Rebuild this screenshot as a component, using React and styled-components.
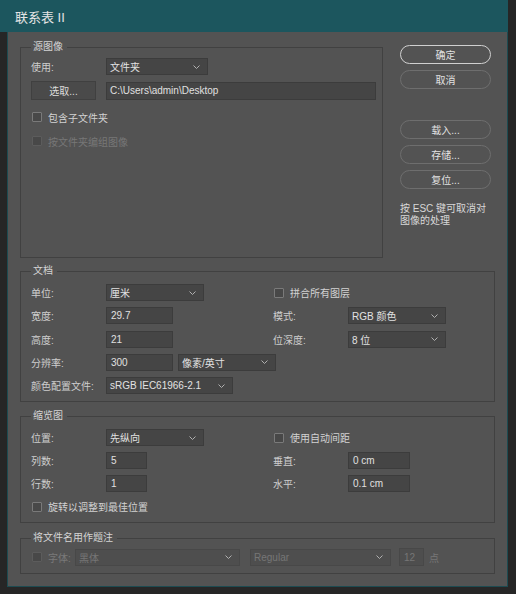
import React from "react";
import styled, { createGlobalStyle } from "styled-components";

const GlobalStyle = createGlobalStyle`
  html, body {
    margin: 0;
    padding: 0;
    background: #262626;
  }
  body {
    width: 516px;
    height: 594px;
    overflow: hidden;
    font-family: "Liberation Sans", "Noto Sans CJK SC", sans-serif;
    font-size: 10px;
    color: #d0d0d0;
  }
`;

const Window = styled.div`
  width: 508px;
`;

const TitleBar = styled.div`
  height: 32px;
  box-sizing: border-box;
  padding-left: 15px;
  display: flex;
  align-items: center;
  background: #1c565e;
  color: #e4e4e4;
  font-size: 13px;
`;

const Body = styled.div`
  margin-left: 7px;
  padding: 8px 12px 12px;
  background: #535353;
  border: 1px solid #1d4b51;
  border-top: none;
  display: flex;
  flex-direction: column;
`;

const TopRow = styled.div`
  display: flex;
  align-items: flex-start;
  gap: 17px;
`;

const Group = styled.fieldset`
  margin: ${(p) => p.$mt || 0}px 0 0;
  padding: ${(p) => p.$pad || "6px 10px 7px"};
  width: ${(p) => (p.$w ? `${p.$w}px` : "auto")};
  min-height: ${(p) => (p.$h ? `${p.$h}px` : "0")};
  min-width: 0;
  box-sizing: border-box;
  border: 1px solid #414141;
`;

const Legend = styled.legend`
  padding: 0 4px 0 2px;
  font-size: 10px;
  line-height: 14px;
  color: #d4d4d4;
`;

const Row = styled.div`
  display: flex;
  align-items: center;
  height: ${(p) => p.$h || 17}px;
  margin-top: ${(p) => p.$mt || 0}px;
`;

const Label = styled.span`
  width: ${(p) => (p.$w ? `${p.$w}px` : "75px")};
  flex-shrink: 0;
  color: ${(p) => (p.$disabled ? "#7a7a7a" : "#cecece")};
  white-space: nowrap;
`;

const SelectBox = styled.div`
  width: ${(p) => p.$w}px;
  height: 17px;
  box-sizing: border-box;
  padding: 0 7px 0 3px;
  margin-left: ${(p) => p.$ml || 0}px;
  display: flex;
  align-items: center;
  justify-content: space-between;
  flex-shrink: 0;
  background: ${(p) => (p.$disabled ? "#4e4e4e" : "#454545")};
  border: 1px solid ${(p) => (p.$disabled ? "#484848" : "#3c3c3c")};
  color: ${(p) => (p.$disabled ? "#767676" : "#e2e2e2")};
  white-space: nowrap;
`;

const Field = styled.div`
  width: ${(p) => p.$w}px;
  height: ${(p) => p.$h || 17}px;
  box-sizing: border-box;
  padding-left: ${(p) => p.$pl ?? 4}px;
  margin-left: ${(p) => p.$ml || 0}px;
  display: flex;
  align-items: center;
  flex-shrink: 0;
  background: ${(p) => (p.$disabled ? "#4e4e4e" : "#454545")};
  border: 1px solid ${(p) => (p.$disabled ? "#484848" : "#3c3c3c")};
  color: ${(p) => (p.$disabled ? "#767676" : "#e0e0e0")};
  white-space: nowrap;
`;

const BrowseButton = styled.div`
  width: 65px;
  height: 19px;
  margin-right: 10px;
  flex-shrink: 0;
  box-sizing: border-box;
  display: flex;
  align-items: center;
  justify-content: center;
  background: #4a4a4a;
  border: 1px solid #404040;
  color: #dcdcdc;
`;

const Check = styled.div`
  display: flex;
  align-items: center;
  height: ${(p) => p.$h || 12}px;
  margin-top: ${(p) => p.$mt || 0}px;
  padding-left: 1px;
  color: ${(p) => (p.$disabled ? "#777777" : "#d2d2d2")};
  white-space: nowrap;
`;

const Box = styled.span`
  width: 10px;
  height: 10px;
  box-sizing: border-box;
  margin-right: 6px;
  flex-shrink: 0;
  border-radius: 1px;
  background: #484848;
  border: 1px solid ${(p) => (p.$disabled ? "#5c5c5c" : "#7a7a7a")};
`;

const Side = styled.div`
  width: 91px;
  padding-top: 5px;
  display: flex;
  flex-direction: column;
`;

const PillButton = styled.div`
  height: 19px;
  margin-top: ${(p) => p.$mt || 0}px;
  box-sizing: border-box;
  border-radius: 10px;
  display: flex;
  align-items: center;
  justify-content: center;
  border: ${(p) => (p.$primary ? "1.5px solid #d0d0d0" : "1px solid #6e6e6e")};
  color: #e2e2e2;
`;

const Hint = styled.div`
  margin-top: 14px;
  line-height: 12px;
  color: #d8d8d8;
  white-space: nowrap;
`;

const FormGrid = styled.div`
  display: grid;
  grid-template-columns: 242px 1fr;
  grid-auto-rows: 17px;
  row-gap: ${(p) => p.$gap || 6}px;
  align-items: center;
`;

const Cell = styled.div`
  display: flex;
  align-items: center;
  grid-column: ${(p) => (p.$span ? "1 / -1" : "auto")};
`;

const Unit = styled.span`
  margin-left: 5px;
  color: #777777;
`;

const Chevron = () => (
  <svg width="7" height="4" viewBox="0 0 7 4">
    <path d="M0.5 0.5 L3.5 3.5 L6.5 0.5" fill="none" stroke="#b0b0b0" strokeWidth="1" />
  </svg>
);

const Select = ({ w, ml, disabled, children }) => (
  <SelectBox $w={w} $ml={ml} $disabled={disabled}>
    <span>{children}</span>
    <Chevron />
  </SelectBox>
);

const Checkbox = ({ disabled, mt, h, children }) => (
  <Check $disabled={disabled} $mt={mt} $h={h}>
    <Box $disabled={disabled} />
    {children}
  </Check>
);

export default function App() {
  return (
    <>
      <GlobalStyle />
      <Window>
        <TitleBar>联系表 II</TitleBar>
        <Body>
          <TopRow>
            <Group $w={363} $h={218} $pad="4px 6px 0 10px">
              <Legend>源图像</Legend>
              <Row>
                <Label>使用:</Label>
                <Select w={102}>文件夹</Select>
              </Row>
              <Row $h={19} $mt={6}>
                <BrowseButton>选取...</BrowseButton>
                <Field $w={270} $h={18} $pl={3}>C:\Users\admin\Desktop</Field>
              </Row>
              <Checkbox mt={11}>包含子文件夹</Checkbox>
              <Checkbox mt={12} disabled>按文件夹编组图像</Checkbox>
            </Group>
            <Side>
              <PillButton $primary>确定</PillButton>
              <PillButton $mt={6}>取消</PillButton>
              <PillButton $mt={31}>载入...</PillButton>
              <PillButton $mt={6}>存储...</PillButton>
              <PillButton $mt={6}>复位...</PillButton>
              <Hint>
                按 ESC 键可取消对
                <br />
                图像的处理
              </Hint>
            </Side>
          </TopRow>

          <Group $mt={6}>
            <Legend>文档</Legend>
            <FormGrid $gap={6.3}>
              <Cell>
                <Label>单位:</Label>
                <Select w={98}>厘米</Select>
              </Cell>
              <Cell>
                <Checkbox h={17}>拼合所有图层</Checkbox>
              </Cell>
              <Cell>
                <Label>宽度:</Label>
                <Field $w={67}>29.7</Field>
              </Cell>
              <Cell>
                <Label>模式:</Label>
                <Select w={98}>RGB 颜色</Select>
              </Cell>
              <Cell>
                <Label>高度:</Label>
                <Field $w={67}>21</Field>
              </Cell>
              <Cell>
                <Label>位深度:</Label>
                <Select w={98}>8 位</Select>
              </Cell>
              <Cell $span>
                <Label>分辨率:</Label>
                <Field $w={67}>300</Field>
                <Select w={98} ml={5}>像素/英寸</Select>
              </Cell>
              <Cell $span>
                <Label>颜色配置文件:</Label>
                <Select w={127}>sRGB IEC61966-2.1</Select>
              </Cell>
            </FormGrid>
          </Group>

          <Group $mt={7}>
            <Legend>缩览图</Legend>
            <FormGrid $gap={6}>
              <Cell>
                <Label>位置:</Label>
                <Select w={98}>先纵向</Select>
              </Cell>
              <Cell>
                <Checkbox h={17}>使用自动间距</Checkbox>
              </Cell>
              <Cell>
                <Label>列数:</Label>
                <Field $w={41}>5</Field>
              </Cell>
              <Cell>
                <Label>垂直:</Label>
                <Field $w={62}>0 cm</Field>
              </Cell>
              <Cell>
                <Label>行数:</Label>
                <Field $w={41}>1</Field>
              </Cell>
              <Cell>
                <Label>水平:</Label>
                <Field $w={62}>0.1 cm</Field>
              </Cell>
              <Cell $span>
                <Checkbox h={17}>旋转以调整到最佳位置</Checkbox>
              </Cell>
            </FormGrid>
          </Group>

          <Group $mt={8} $pad="3px 10px 7px">
            <Legend>将文件名用作题注</Legend>
            <Row $h={18}>
              <Checkbox h={18} disabled>
                <Label $w={27} $disabled>字体:</Label>
              </Checkbox>
              <Select w={165} disabled>黑体</Select>
              <Select w={141} ml={10} disabled>Regular</Select>
              <Field $w={25} $h={18} $ml={8} $disabled>12</Field>
              <Unit>点</Unit>
            </Row>
          </Group>
        </Body>
      </Window>
    </>
  );
}
